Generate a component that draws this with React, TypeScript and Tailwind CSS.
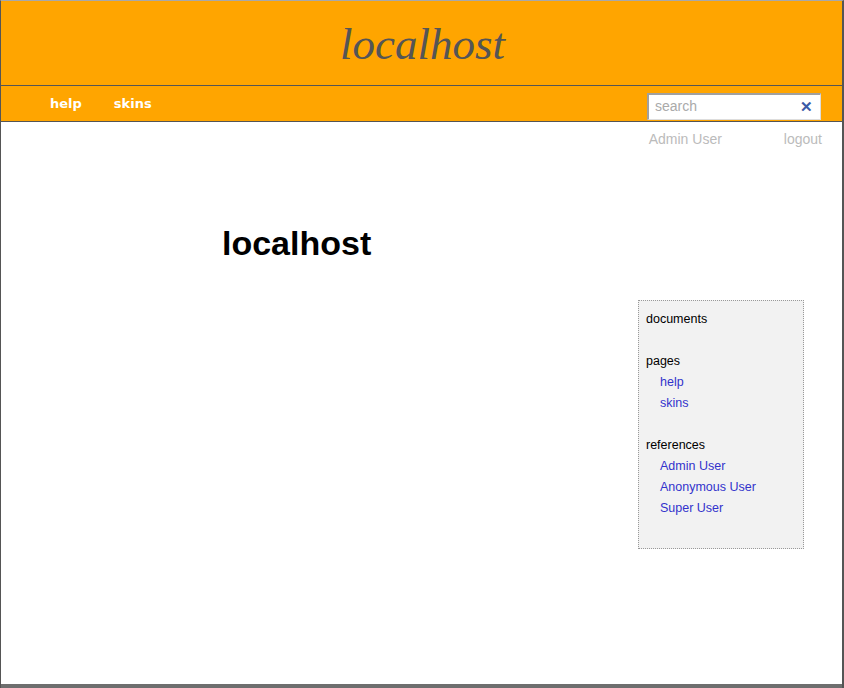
import React from "react";

export default function App() {
  const sans = { fontFamily: '"Liberation Sans", Arial, sans-serif' };
  return (
    <div
      className="w-[844px] h-[688px] flex flex-col bg-white overflow-hidden border-t border-t-[#a8a8a8] border-l border-l-[#555] border-r-2 border-r-[#555]"
      style={sans}
    >
      <header className="h-[85px] shrink-0 bg-[#ffa500] border-b border-b-[#555] flex items-center justify-center">
        <span
          className="text-[45px] italic text-[#555] leading-none pt-[2px] pl-[2px]"
          style={{ fontFamily: '"Liberation Serif", Georgia, serif' }}
        >
          localhost
        </span>
      </header>
      <nav className="h-[36px] shrink-0 bg-[#ffa500] border-b border-b-[#555] flex items-center pl-[49px] pr-[21px]">
        <div
          className="flex gap-[32px] text-[13px] font-bold text-white"
          style={{ fontFamily: '"DejaVu Sans", Verdana, sans-serif' }}
        >
          <span>help</span>
          <span>skins</span>
        </div>
        <div className="ml-auto w-[174px] h-[27px] bg-white border-t-2 border-l-2 border-t-[#a0a0a0] border-l-[#a0a0a0] border-b border-r border-b-[#ddd] border-r-[#ddd] flex items-center pl-[6px] pr-[7px] mt-[5px]">
          <span className="text-[14px] text-[#aaa]">search</span>
          <span className="ml-auto text-[15px] font-bold text-[#3b5aa6] leading-none">✕</span>
        </div>
      </nav>
      <div className="flex justify-end pr-[20px] pt-[7px] text-[14px] text-[#bbb] gap-[62px]">
        <span>Admin User</span>
        <span>logout</span>
      </div>
      <div className="flex-1 flex">
        <div className="flex-1 pl-[221px] pt-[76px]">
          <h1 className="text-[34px] font-bold text-black leading-none">localhost</h1>
        </div>
        <div className="w-[166px] mr-[38px] mt-[150px] self-start">
          <div className="border border-dotted border-[#999] bg-[#f2f2f2] pl-[7px] pt-[8px] pb-[29px] text-[12.5px] leading-[21px]">
            <div className="text-black">documents</div>
            <div className="h-[21px]" />
            <div className="text-black">pages</div>
            <div className="pl-[14px] text-[#3333cc]">help</div>
            <div className="pl-[14px] text-[#3333cc]">skins</div>
            <div className="h-[21px]" />
            <div className="text-black">references</div>
            <div className="pl-[14px] text-[#3333cc]">Admin User</div>
            <div className="pl-[14px] text-[#3333cc]">Anonymous User</div>
            <div className="pl-[14px] text-[#3333cc]">Super User</div>
          </div>
        </div>
      </div>
      <div className="h-[4px] shrink-0 bg-[#6e6e6e] -mx-[1px]" />
    </div>
  );
}
